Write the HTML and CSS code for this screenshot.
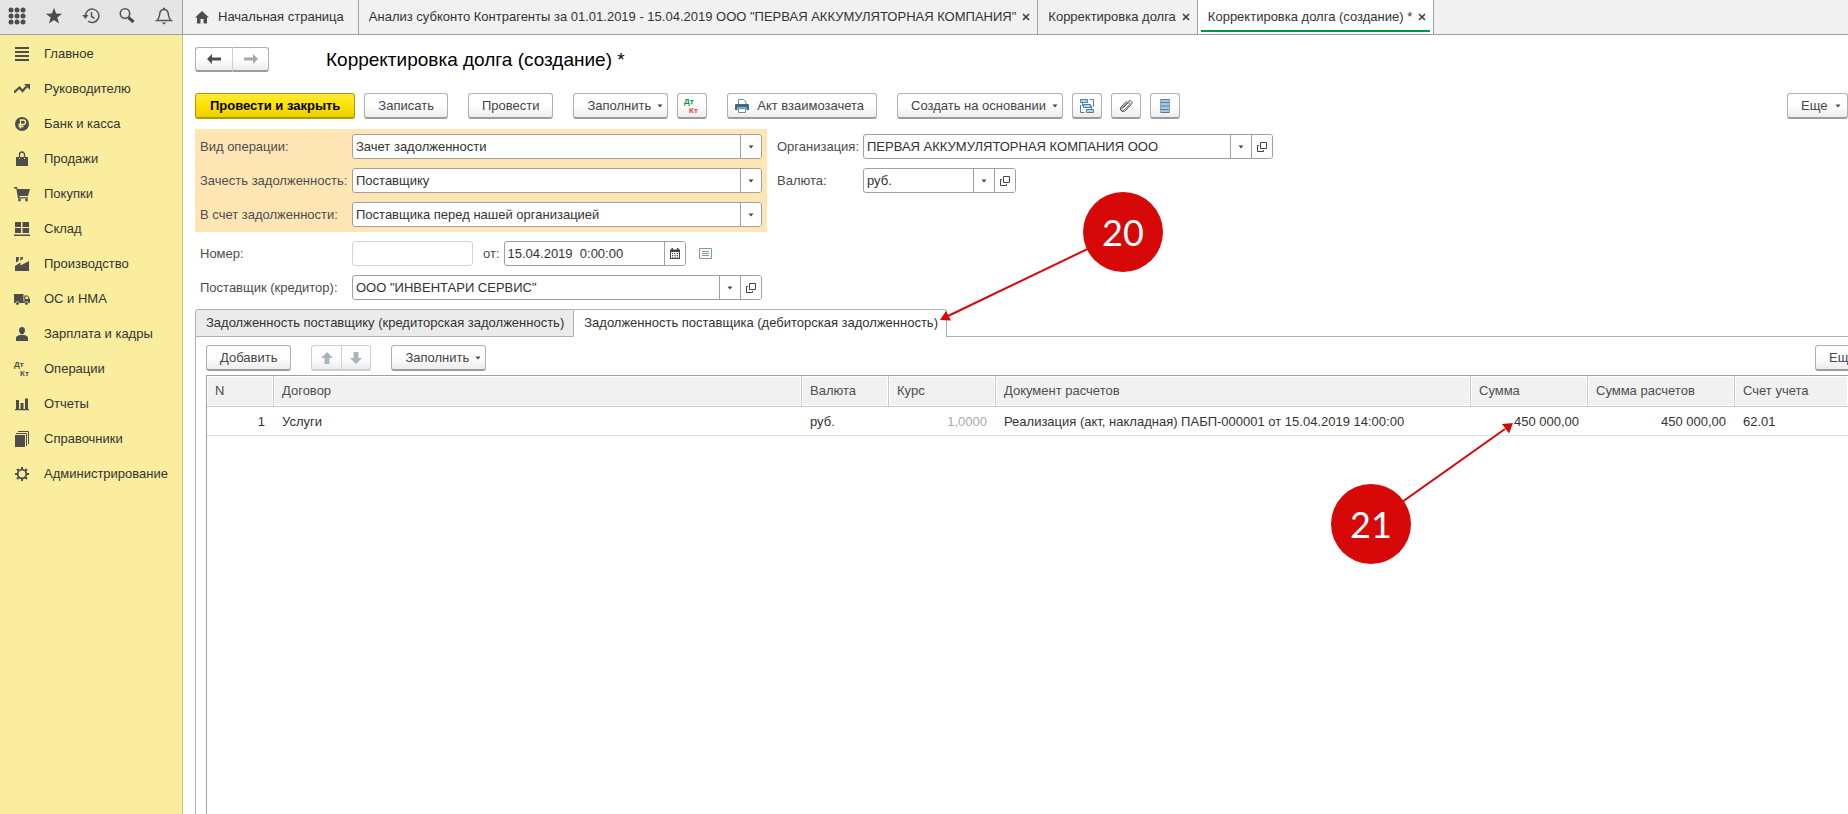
FILE: index.html
```
<!DOCTYPE html>
<html lang="ru">
<head>
<meta charset="utf-8">
<title>Корректировка долга (создание) *</title>
<link rel="stylesheet" href="styles.css">
</head>
<body>
<svg class="defs" aria-hidden="true">
  <symbol id="open" viewBox="0 0 12 12"><path d="M4.500 1.500h6v6h-6zM3 4.500H1.500v6h6V9" fill="none" stroke="#444" stroke-width="1"/></symbol>
  <symbol id="caret" viewBox="0 0 6 4"><path d="M0.500 0.500h5L3 3.500z" fill="#444"/></symbol>
  <symbol id="close" viewBox="0 0 8 8"><path d="M1 1l6 6M7 1L1 7" stroke="#3c3c3c" stroke-width="1.600"/></symbol>
</svg>
<div class="app">
<header class="topbar">
  <div class="tools">
    <button class="tool" aria-label="Меню"><svg width="18" height="18" viewBox="0 0 18 18"><g fill="#4d4d4d"><circle cx="3" cy="3" r="2.500"/><circle cx="9" cy="3" r="2.500"/><circle cx="15" cy="3" r="2.500"/><circle cx="3" cy="9" r="2.500"/><circle cx="9" cy="9" r="2.500"/><circle cx="15" cy="9" r="2.500"/><circle cx="3" cy="15" r="2.500"/><circle cx="9" cy="15" r="2.500"/><circle cx="15" cy="15" r="2.500"/></g></svg></button>
    <button class="tool" aria-label="Избранное"><svg width="18" height="18" viewBox="0 0 18 18"><path d="M9 .8l2.100 5.700 6 .2-4.800 3.700 1.800 6L9 13l-5.100 3.400 1.800-6L.9 6.700l6-.2z" fill="#4d4d4d"/></svg></button>
    <button class="tool" aria-label="История"><svg width="18" height="18" viewBox="0 0 18 18"><path d="M3.500 9.500A6.700 6.700 0 1 1 6 14" fill="none" stroke="#555" stroke-width="1.500"/><path d="M.3 8h6.200l-3.100 4z" fill="#555"/><path d="M9.500 5v4.500l3 1.800" fill="none" stroke="#555" stroke-width="1.500"/></svg></button>
    <button class="tool" aria-label="Поиск"><svg width="18" height="18" viewBox="0 0 18 18"><circle cx="7" cy="6.500" r="4.700" fill="none" stroke="#555" stroke-width="1.600"/><path d="M10.500 10.500l5 4.500" stroke="#4d4d4d" stroke-width="3.200"/></svg></button>
    <button class="tool" aria-label="Уведомления"><svg width="18" height="18" viewBox="0 0 18 18"><path d="M1.800 13.500C5 11 4.300 8.500 5 5.500 5.500 3.500 7 2.500 9 2.500s3.500 1 4 3c.7 3 0 5.500 3.200 8z" fill="none" stroke="#555" stroke-width="1.500"/><path d="M6.500 15.500h5L9 17.500zM8 .8h2v2H8z" fill="#555"/></svg></button>
  </div>
  <nav class="wintabs" aria-label="Открытые окна">
    <a class="wintab home" href="#"><svg width="14" height="13" viewBox="0 0 14 13"><path d="M7 0l7 6.500h-2V12.500H8.500V8h-3v4.500H2V6.500H0z" fill="#4d4d4d"/></svg>Начальная страница</a>
    <a class="wintab" href="#">Анализ субконто Контрагенты за 01.01.2019 - 15.04.2019 ООО "ПЕРВАЯ АККУМУЛЯТОРНАЯ КОМПАНИЯ"<svg width="8" height="8"><use href="#close"/></svg></a>
    <a class="wintab" href="#">Корректировка долга<svg width="8" height="8"><use href="#close"/></svg></a>
    <a class="wintab current" href="#">Корректировка долга (создание) *<svg width="8" height="8"><use href="#close"/></svg></a>
  </nav>
</header>
<div class="body">
<nav class="sidebar" aria-label="Разделы">
  <a href="#"><svg width="16" height="16" viewBox="0 0 16 16"><path d="M1 1h14v2H1zM1 5h14v2H1zM1 9h14v2H1zM1 13h14v2H1z" fill="#4d4d4d"/></svg>Главное</a>
  <a href="#"><svg width="16" height="16" viewBox="0 0 16 16"><path d="M0 11.500L5.500 6.500 8.500 10l4-4.500" fill="none" stroke="#4d4d4d" stroke-width="2.200"/><path d="M10 3h6v6z" fill="#4d4d4d"/></svg>Руководителю</a>
  <a href="#"><svg width="16" height="16" viewBox="0 0 16 16"><circle cx="8" cy="8" r="7" fill="#4d4d4d"/><path d="M6.500 12.500V4h2.800a2.200 2.200 0 0 1 0 4.500H4.500M4.500 10.500h5" fill="none" stroke="#fbed9e" stroke-width="1.300"/></svg>Банк и касса</a>
  <a href="#"><svg width="16" height="16" viewBox="0 0 16 16"><path d="M2 6h3v2h1V6h4v2h1V6h3v9H2z" fill="#4d4d4d"/><path d="M5.500 7V3.500a2.500 2.500 0 0 1 5 0V7" fill="none" stroke="#4d4d4d" stroke-width="1.300"/></svg>Продажи</a>
  <a href="#"><svg width="16" height="16" viewBox="0 0 16 16"><path d="M0 1h3l.6 2H16l-2 7H5.500v1.200H14v1.300H4L2.300 2.500H0z" fill="#4d4d4d"/><circle cx="5.500" cy="14" r="1.400" fill="#4d4d4d"/><circle cx="12.500" cy="14" r="1.400" fill="#4d4d4d"/></svg>Покупки</a>
  <a href="#"><svg width="16" height="16" viewBox="0 0 16 16"><path d="M1 1h6v5H1zM8.500 1H15v5H8.500zM1 7h6v5H1zM8.500 7H15v5H8.500zM0 13.500h16v1.500H0z" fill="#4d4d4d"/></svg>Склад</a>
  <a href="#"><svg width="16" height="16" viewBox="0 0 16 16"><path d="M1 15V10l5.500-3.500V9.500L15 5v10zM2 1h3L4.500 5 2 6.500zM6.500 1h2.500L8.500 3.500 6 4.500z" fill="#4d4d4d"/></svg>Производство</a>
  <a href="#"><svg width="16" height="16" viewBox="0 0 16 16"><path d="M0 3h9.500v9H0zM10.300 4.500h3.500L16 8v4h-5.700zM9 10.500h2V12H9z" fill="#4d4d4d"/><path d="M11.500 5.500h2l1 2.500h-3z" fill="#fbed9e"/><circle cx="3.500" cy="12.500" r="1.800" fill="#4d4d4d" stroke="#fbed9e" stroke-width=".7"/><circle cx="12.500" cy="12.500" r="1.800" fill="#4d4d4d" stroke="#fbed9e" stroke-width=".7"/></svg>ОС и НМА</a>
  <a href="#"><svg width="16" height="16" viewBox="0 0 16 16"><path d="M8 1c2 0 3 1.300 3 3.300S9.800 8.500 8 8.500 5 6.300 5 4.300 6 1 8 1zM2 15v-3c0-1.500 1-2.500 4-3h4c3 .5 4 1.500 4 3v3z" fill="#4d4d4d"/></svg>Зарплата и кадры</a>
  <a href="#"><svg class="dtkt" width="16" height="16" viewBox="0 0 16 16"><text x="0" y="6">Дт</text><text x="6" y="15">Кт</text></svg>Операции</a>
  <a href="#"><svg width="16" height="16" viewBox="0 0 16 16"><path d="M2 4h3v9H2zM6.500 7h3v6h-3zM11 2.500h3V13h-3zM1 13h14v1.300H1z" fill="#4d4d4d"/></svg>Отчеты</a>
  <a href="#"><svg width="16" height="16" viewBox="0 0 16 16"><path d="M1 4h10v12H1z" fill="#4d4d4d"/><path d="M2 2.500h10.500V15M4 .5h10.500V13" fill="none" stroke="#4d4d4d"/></svg>Справочники</a>
  <a href="#"><svg width="16" height="16" viewBox="0 0 16 16"><circle cx="8" cy="8" r="4.300" fill="none" stroke="#4d4d4d" stroke-width="1.800"/><path d="M8 1v2.500M8 12.500V15M1 8h2.500M12.500 8H15M3 3l2 2M11 11l2 2M13 3l-2 2M5 11l-2 2" stroke="#4d4d4d" stroke-width="2"/></svg>Администрирование</a>
</nav>
<main class="main">
  <div class="heading">
    <div class="pair"><button class="btn" aria-label="Назад"><svg width="14" height="10" viewBox="0 0 14 10"><path d="M0 5l5-5v3.500h9v3H5V10z" fill="#4d4d4d"/></svg></button><button class="btn" aria-label="Вперед"><svg width="14" height="10" viewBox="0 0 14 10"><path d="M14 5L9 0v3.500H0v3h9V10z" fill="#a9a9a9"/></svg></button></div>
    <h1>Корректировка долга (создание) *</h1>
  </div>
  <div class="toolbar">
    <button class="btn primary">Провести и закрыть</button>
    <button class="btn">Записать</button>
    <button class="btn gap">Провести</button>
    <button class="btn gap menu">Заполнить<svg width="6" height="4"><use href="#caret"/></svg></button>
    <button class="btn square" aria-label="Дт Кт"><svg class="dtkt color" width="16" height="16" viewBox="0 0 16 16"><text x="0" y="6">Дт</text><text x="5" y="15">Кт</text></svg></button>
    <button class="btn gap print"><svg width="14" height="14" viewBox="0 0 14 14"><path d="M3.500 5V.5h5L11 3v2" fill="#fff" stroke="#6f8da5"/><path d="M1 5h12a1 1 0 0 1 1 1v5h-2.500V8.500h-9V11H0V6a1 1 0 0 1 1-1z" fill="#3d6a8c"/><path d="M3.500 9.500h7v4h-7z" fill="#fff" stroke="#6f8da5"/></svg>Акт взаимозачета</button>
    <button class="btn gap menu">Создать на основании<svg width="6" height="4"><use href="#caret"/></svg></button>
    <button class="btn square" aria-label="Структура подчиненности"><svg width="16" height="16" viewBox="0 0 16 16"><g fill="#b9d3e6" stroke="#4d7ea3"><path d="M1.500 1.500h7v3h-7zM4.500 6.500h7v3h-7zM7.500 11.500h7v3h-7z"/><path d="M10.500 1.500h4v7M1.500 7v7.500h4M3.500 4.500V8M12.500 8v3" fill="none"/></g></svg></button>
    <button class="btn square" aria-label="Файлы"><svg width="16" height="16" viewBox="0 0 16 16"><path d="M4.500 10.500l5.500-5.500c1.200-1.200 2.700.2 1.600 1.500L6 12.300c-1.800 1.800-4-.3-2.300-2.200l6.500-6.700c2.300-2.200 5.300.5 3.200 3L7.500 12.500C5 15 .7 12 3 9l5.500-5.700" fill="none" stroke="#555" stroke-width="1"/></svg></button>
    <button class="btn square" aria-label="Журнал"><svg width="12" height="16" viewBox="0 0 12 16"><path d="M1 1h10v14H1z" fill="#a9c7dc"/><path d="M1 1.500h10M1 4.500h10M1 8h10M1 11.500h10M1 14.500h10" stroke="#4d7ea3"/><path d="M1.500 1v14M10.500 1v14" stroke="#7fa6c2"/></svg></button>
    <button class="btn menu more">Еще<svg width="6" height="4"><use href="#caret"/></svg></button>
  </div>
  <form class="form">
    <div class="cols">
      <div class="group tinted">
        <label for="op">Вид операции:</label>
        <div class="field"><input id="op" value="Зачет задолженности"><button type="button" aria-label="Выбрать"><svg width="6" height="4"><use href="#caret"/></svg></button></div>
        <label for="debt">Зачесть задолженность:</label>
        <div class="field"><input id="debt" value="Поставщику"><button type="button" aria-label="Выбрать"><svg width="6" height="4"><use href="#caret"/></svg></button></div>
        <label for="against">В счет задолженности:</label>
        <div class="field"><input id="against" value="Поставщика перед нашей организацией"><button type="button" aria-label="Выбрать"><svg width="6" height="4"><use href="#caret"/></svg></button></div>
      </div>
      <div class="group org">
        <label for="org">Организация:</label>
        <div class="field"><input id="org" value="ПЕРВАЯ АККУМУЛЯТОРНАЯ КОМПАНИЯ ООО"><button type="button" aria-label="Выбрать"><svg width="6" height="4"><use href="#caret"/></svg></button><button type="button" aria-label="Открыть"><svg width="12" height="12"><use href="#open"/></svg></button></div>
        <label for="cur">Валюта:</label>
        <div class="field narrow"><input id="cur" value="руб."><button type="button" aria-label="Выбрать"><svg width="6" height="4"><use href="#caret"/></svg></button><button type="button" aria-label="Открыть"><svg width="12" height="12"><use href="#open"/></svg></button></div>
      </div>
    </div>
    <div class="group plain">
      <label for="num">Номер:</label>
      <div class="row">
        <div class="field pale"><input id="num" value=""></div>
        <label for="date">от:</label>
        <div class="field date"><input id="date" value="15.04.2019  0:00:00"><button type="button" aria-label="Календарь"><svg width="10" height="11" viewBox="0 0 10 11"><path d="M0 1.500h1.500V0h1.500v1.500h4V0h1.500v1.500H10V11H0z" fill="#444"/><path d="M1 4h8v6H1z" fill="#fff"/><path d="M2 5.500h6M2 7.500h6M2 9.200h6" stroke="#444" stroke-dasharray="1.200 1.200"/></svg></button></div>
        <svg class="list" width="13" height="11" viewBox="0 0 13 11"><path d="M.5.500h12v10H.5z" fill="#fff" stroke="#8397a6"/><path d="M3 3.500h7M3 5.500h7M3 7.500h7" stroke="#8397a6"/></svg>
      </div>
      <label for="sup">Поставщик (кредитор):</label>
      <div class="field"><input id="sup" value='ООО "ИНВЕНТАРИ СЕРВИС"'><button type="button" aria-label="Выбрать"><svg width="6" height="4"><use href="#caret"/></svg></button><button type="button" aria-label="Открыть"><svg width="12" height="12"><use href="#open"/></svg></button></div>
    </div>
  </form>
  <div class="tabs" role="tablist">
    <button class="tab" role="tab">Задолженность поставщику (кредиторская задолженность)</button>
    <button class="tab active" role="tab" aria-selected="true">Задолженность поставщика (дебиторская задолженность)</button>
  </div>
  <section class="panel">
    <div class="subbar">
      <button class="btn">Добавить</button>
      <div class="pair small"><button class="btn" aria-label="Вверх"><svg width="12" height="12" viewBox="0 0 12 12"><path d="M6 0l6 6H8.500v6h-5V6H0z" fill="#a9b4bb"/></svg></button><button class="btn" aria-label="Вниз"><svg width="12" height="12" viewBox="0 0 12 12"><path d="M6 12l6-6H8.500V0h-5v6H0z" fill="#a9b4bb"/></svg></button></div>
      <button class="btn menu">Заполнить<svg width="6" height="4"><use href="#caret"/></svg></button>
      <button class="btn menu more">Еще<svg width="6" height="4"><use href="#caret"/></svg></button>
    </div>
    <div class="gridbox">
    <table class="grid">
      <colgroup><col class="c-n"><col class="c-contract"><col class="c-cur"><col class="c-rate"><col class="c-doc"><col class="c-sum"><col class="c-calc"><col></colgroup>
      <thead><tr><th>N</th><th>Договор</th><th>Валюта</th><th>Курс</th><th>Документ расчетов</th><th>Сумма</th><th>Сумма расчетов</th><th>Счет учета</th></tr></thead>
      <tbody><tr><td class="num">1</td><td>Услуги</td><td>руб.</td><td class="num dim">1,0000</td><td>Реализация (акт, накладная) ПАБП-000001 от 15.04.2019 14:00:00</td><td class="num">450 000,00</td><td class="num">450 000,00</td><td>62.01</td></tr></tbody>
    </table>
    </div>
  </section>
</main>
</div>
<svg class="callouts" width="1848" height="814" viewBox="0 0 1848 814">
  <g fill="#d70808" stroke="#d70808">
    <path d="M1123 232L948 316M1371 524L1505 429" stroke-width="2" fill="none"/>
    <path d="M940 320l6-9 5 9.500zM1513 423l-11 1 7 9.500z" stroke="none"/>
    <circle cx="1123" cy="232" r="40" stroke="none"/><circle cx="1371" cy="524" r="40" stroke="none"/>
  </g>
  <text x="1123" y="246">20</text><text x="1371" y="538">21</text>
</svg>
</div>
</body>
</html>
```
FILE: styles.css
```
* { box-sizing: border-box; }
body { margin: 0; overflow: hidden; background: #fff; color: #333; }
body, button, input { font: 13px/16px "Liberation Sans", Arial, sans-serif; }
a { color: inherit; text-decoration: none; }
button { cursor: pointer; }
svg { flex: none; }
.defs { position: absolute; width: 0; height: 0; }
.app { position: relative; display: flex; flex-direction: column; height: 100vh; overflow: hidden; }

.topbar { display: flex; flex: none; height: 35px; background: #f1f1f1; border-bottom: 1px solid #a0a0a0; }
.tools { display: flex; justify-content: space-between; align-items: center; width: 183px; padding: 0 9px 3px 8px; background: #e5e5e5; border-right: 1px solid #a0a0a0; }
.tool { display: flex; padding: 0; background: none; border: 0; }
.wintabs { display: flex; }
.wintab { display: flex; align-items: center; gap: 6px; padding: 0 7px 0 10px; border-right: 1px solid #a0a0a0; white-space: nowrap; }
.wintab.home { gap: 9px; padding: 0 14px 0 12px; }
.wintab.current { position: relative; background: #fff; }
.wintab.current::after { content: ""; position: absolute; left: 3px; right: 3px; bottom: 2px; height: 2px; background: #009646; }

.body { display: flex; flex: 1; min-height: 0; }
.sidebar { flex: none; width: 183px; padding-top: 1px; background: #fbed9e; border-right: 1px solid #c9bf85; }
.sidebar a { display: flex; align-items: center; gap: 14px; height: 35px; padding-left: 14px; }
.dtkt { overflow: visible; font: bold 8px/8px "Liberation Sans", Arial, sans-serif; fill: #4d4d4d; }
.dtkt.color { fill: #009646; }
.dtkt.color text + text { fill: #e04040; }

.main { display: flex; flex: 1; flex-direction: column; min-width: 0; padding: 12px 0 0 12px; }
.heading { display: flex; align-items: center; gap: 57px; height: 25px; }
h1 { margin: 0; padding-top: 1px; color: #000; font-size: 19px; font-weight: 400; line-height: 22px; }

.btn { display: flex; align-items: center; justify-content: center; height: 26px; padding: 1px 13px 0; color: #444; white-space: nowrap; background: linear-gradient(#fff 50%, #ececec); border: 1px solid #b0b0b0; border-bottom: 2px solid #9c9c9c; border-radius: 3px; }
.pair { display: flex; }
.pair .btn { width: 37px; height: 25px; padding: 0; }
.pair .btn:first-child { border-right: 0; border-radius: 3px 0 0 3px; }
.pair .btn:last-child { border-left-color: #d0d0d0; border-radius: 0 3px 3px 0; }
.pair.small .btn { width: 30px; height: 26px; border-color: #cfcfcf; }

.toolbar { display: flex; gap: 9px; margin-top: 21px; }
.toolbar .gap { margin-left: 11px; }
.btn.primary { padding: 1px 14px 0; color: #000; font-weight: 700; background: linear-gradient(#ffea3c, #ffe200 50%, #edcf00); border-color: #b09c00; }
.btn.menu { gap: 6px; padding: 1px 4px 0 13px; }
.btn.square { width: 30px; padding: 0; }
.btn.print { gap: 8px; padding: 1px 12px 0 7px; }
.btn.more { justify-content: flex-start; width: 61px; margin-left: auto; gap: 8px; }

.form { margin-top: 10px; }
.cols { display: flex; }
.group { display: grid; grid-template-columns: 152px 410px; row-gap: 9px; align-items: center; padding: 5px; }
.group.org { grid-template-columns: 86px 410px; align-content: start; padding-left: 10px; }
.group.plain { padding-top: 9px; }
.tinted { background: #ffe6b4; }
label { color: #4d4d4d; white-space: nowrap; }
.row { display: flex; align-items: center; }
.row label { margin: 0 4px 0 10px; }
.field { display: flex; height: 25px; overflow: hidden; background: #fff; border: 1px solid #a0a0a0; border-radius: 3px; }
.field input { flex: 1; min-width: 0; padding: 0 3px; color: #333; background: none; border: 0; outline: 0; white-space: pre; }
.field button { display: flex; align-items: center; justify-content: center; width: 21px; padding: 0; background: #fff; border: 0; border-left: 1px solid #a0a0a0; }
.field.narrow { width: 153px; }
.field.pale { width: 121px; border-color: #d4d4d4; }
.field.date { width: 182px; }
.list { margin-left: 13px; }

.tabs { display: flex; height: 28px; margin-top: 4px; }
.tabs::after { content: ""; flex: 1; border-bottom: 1px solid #b0b0b0; }
.tab { padding: 0 9px 0 10px; color: #333; background: #ebebeb; border: 1px solid #b0b0b0; border-radius: 3px 0 0 0; white-space: nowrap; }
.tab.active { padding: 0 8px 1px 10px; background: #fff; border-left: 0; border-bottom: 0; border-radius: 0 3px 0 0; }

.panel { display: flex; flex: 1; flex-direction: column; min-height: 0; padding: 8px 0 0 10px; border-left: 1px solid #b0b0b0; }
.subbar { display: flex; gap: 20px; margin-right: -28px; }
.gridbox { flex: 1; margin-top: 4px; border: solid #a0a0a0; border-width: 1px 0 0 1px; }
.grid { width: 100%; table-layout: fixed; border-collapse: separate; border-spacing: 0; }
.grid th { height: 31px; padding: 0 8px; color: #4d4d4d; font-weight: 400; text-align: left; background: #f1f1f1; border: 1px solid #cacaca; border-width: 0 1px 1px 0; box-shadow: inset 0 0 0 1px #fff; white-space: nowrap; }
.grid th:last-child { border-right: 0; }
.grid td { height: 29px; padding: 1px 8px 0; border-bottom: 1px solid #e2e2e2; white-space: nowrap; }
.grid .num { padding-right: 9px; text-align: right; }
.grid .dim { color: #a9a9a9; }
.c-n { width: 67px; }
.c-contract { width: 528px; }
.c-cur { width: 87px; }
.c-rate { width: 107px; }
.c-doc { width: 475px; }
.c-sum { width: 117px; }
.c-calc { width: 147px; }

.callouts { position: absolute; top: 0; left: 0; pointer-events: none; }
.callouts text { fill: #fff; font: 36px Lato, sans-serif; text-anchor: middle; }
```
